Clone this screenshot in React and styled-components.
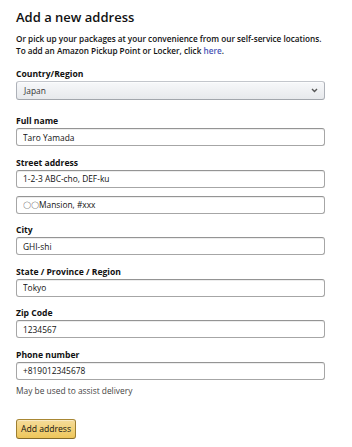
import React from 'react';
import styled, { createGlobalStyle } from 'styled-components';

const GlobalStyle = createGlobalStyle`
    html, body {
        margin: 0;
        padding: 0;
        background: #fff;
    }
    body {
        font-family: "Open Sans", "Noto Sans", Arial, sans-serif;
        color: #111;
    }
`;

const fields = [
    { label: 'Full name', values: ['Taro Yamada'] },
    { label: 'Street address', values: ['1-2-3 ABC-cho, DEF-ku', '〇〇Mansion, #xxx'] },
    { label: 'City', values: ['GHI-shi'] },
    { label: 'State / Province / Region', values: ['Tokyo'] },
    { label: 'Zip Code', values: ['1234567'] },
    { label: 'Phone number', values: ['+819012345678'], hint: 'May be used to assist delivery' },
];

export default function App() {
    return (
        <>
            <GlobalStyle />
            <Page>
                <Title>Add a new address</Title>
                <Intro>
                    Or pick up your packages at your convenience from our self-service locations.
                    <br />
                    To add an Amazon Pickup Point or Locker, click <Link href="#">here</Link>.
                </Intro>

                <Group>
                    <Label>Country/Region</Label>
                    <Select>
                        <span>Japan</span>
                        <svg width="7" height="5" viewBox="0 0 7 5">
                            <path d="M1 1 L3.5 3.5 L6 1" fill="none" stroke="#555" strokeWidth="1.4" />
                        </svg>
                    </Select>
                </Group>

                {fields.map((f, i) => (
                    <Group key={f.label} spaced={i === 0}>
                        <Label>{f.label}</Label>
                        <Inputs>
                            {f.values.map((v) => (
                                <Input key={v} defaultValue={v} />
                            ))}
                        </Inputs>
                        {f.hint && <Hint>{f.hint}</Hint>}
                    </Group>
                ))}

                <Button>Add address</Button>
            </Page>
        </>
    );
}

// ============= Styled Components ==============

const Page = styled.div`
    width: 309px;
    padding: 7px 0 0 16px;
`;

const Title = styled.h1`
    margin: 0;
    font-size: 13px;
    line-height: 20px;
    font-weight: 600;
    color: #111;
`;

const Intro = styled.p`
    margin: 6px 0 0;
    font-size: 8.2px;
    line-height: 12px;
    font-weight: 600;
    color: #111;
    white-space: nowrap;
`;

const Link = styled.a`
    color: #4a55b5;
    text-decoration: none;
`;

const Group = styled.div`
    margin-top: ${(p) => (p.spaced ? '15.5px' : '10.5px')};
`;

const Label = styled.div`
    font-size: 8.6px;
    line-height: 12px;
    font-weight: 700;
    color: #111;
    margin-bottom: 1px;
`;

const Inputs = styled.div`
    display: flex;
    flex-direction: column;
    gap: 8px;
`;

const Input = styled.input`
    box-sizing: border-box;
    width: 100%;
    height: 18px;
    margin: 0;
    padding: 0 6px;
    font-family: inherit;
    font-size: 8.4px;
    color: #111;
    background: #fff;
    border: 1px solid #a6a6a6;
    border-top-color: #949494;
    border-radius: 3px;
    box-shadow: 0 1px 0 rgba(255, 255, 255, 0.5), 0 1px 0 rgba(0, 0, 0, 0.07) inset;
    outline: none;
`;

const Select = styled.div`
    box-sizing: border-box;
    height: 19px;
    display: flex;
    align-items: center;
    justify-content: space-between;
    padding: 0 6px 0 7px;
    font-size: 8.4px;
    color: #333;
    background: linear-gradient(to bottom, #f7f8fa, #e7e9ec);
    border: 1px solid #adb1b8;
    border-top-color: #c3c6cc;
    border-bottom-color: #a2a6ac;
    border-radius: 3px;
    box-shadow: 0 1px 0 rgba(255, 255, 255, 0.6) inset;
`;

const Hint = styled.div`
    margin-top: 5px;
    font-size: 8.4px;
    line-height: 12px;
    color: #444;
`;

const Button = styled.button`
    display: block;
    box-sizing: border-box;
    margin-top: 22px;
    width: 60px;
    height: 20px;
    padding: 0;
    font-family: inherit;
    font-size: 8.6px;
    color: #111;
    background: linear-gradient(to bottom, #f5dc9a, #eec65a);
    border: 1px solid;
    border-color: #a88734 #9c7e31 #846a29;
    border-radius: 3px;
    box-shadow: 0 1px 0 rgba(255, 255, 255, 0.4) inset;
`;
